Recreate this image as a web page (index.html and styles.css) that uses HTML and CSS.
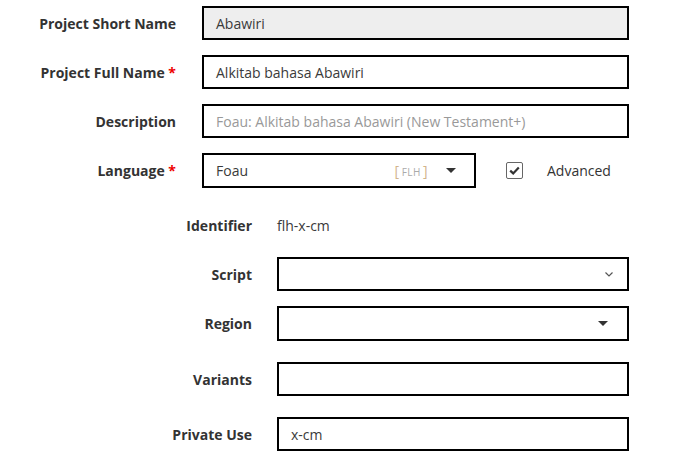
FILE: index.html
```html
<!DOCTYPE html>
<html>
<head>
<meta charset="utf-8">
<link rel="stylesheet" href="styles.css">
</head>
<body>
<form class="form">
  <div class="row">
    <label class="lbl">Project Short Name</label>
    <div class="box box-wide box-readonly"><span class="val">Abawiri</span></div>
  </div>
  <div class="row">
    <label class="lbl">Project Full Name <span class="req">*</span></label>
    <div class="box box-wide"><span class="val">Alkitab bahasa Abawiri</span></div>
  </div>
  <div class="row">
    <label class="lbl">Description</label>
    <div class="box box-wide"><span class="placeholder">Foau: Alkitab bahasa Abawiri (New Testament+)</span></div>
  </div>
  <div class="row">
    <label class="lbl">Language <span class="req">*</span></label>
    <div class="box box-lang">
      <span class="val">Foau</span>
      <span class="code"><span class="br">[</span>FLH<span class="br">]</span></span>
      <span class="caret"></span>
    </div>
    <span class="check">
      <svg width="11" height="9" viewBox="0 0 11 9"><path d="M1.2 4.6 L4.2 7.4 L9.8 1.6" fill="none" stroke="#333" stroke-width="2.2"/></svg>
    </span>
    <span class="check-lbl">Advanced</span>
  </div>

  <div class="row row-adv row-ident">
    <label class="lbl lbl-adv">Identifier</label>
    <span class="ident">flh-x-cm</span>
  </div>
  <div class="row row-adv row-script">
    <label class="lbl lbl-adv">Script</label>
    <div class="box box-adv">
      <svg class="chev" width="8" height="5" viewBox="0 0 8 5"><path d="M0.5 0.5 L4 4 L7.5 0.5" fill="none" stroke="#555" stroke-width="1.2"/></svg>
    </div>
  </div>
  <div class="row row-adv row-region">
    <label class="lbl lbl-adv">Region</label>
    <div class="box box-adv"><span class="caret"></span></div>
  </div>
  <div class="row row-adv row-variants">
    <label class="lbl lbl-adv">Variants</label>
    <div class="box box-adv"></div>
  </div>
  <div class="row row-adv row-private">
    <label class="lbl lbl-adv">Private Use</label>
    <div class="box box-adv"><span class="val">x-cm</span></div>
  </div>
</form>
</body>
</html>
```
FILE: styles.css
```css
html, body {
  margin: 0;
  padding: 0;
  background: #fff;
}
body {
  font-family: "Open Sans", "Noto Sans", sans-serif;
  font-size: 14px;
  color: #333;
}
.form {
  padding-top: 6px;
}
.row {
  display: flex;
  align-items: center;
  gap: 26px;
  margin-bottom: 15px;
}
.lbl {
  width: 176px;
  text-align: right;
  font-weight: 700;
  color: #333;
  flex: none;
}
.req {
  color: #e00;
}
.box {
  box-sizing: border-box;
  height: 34px;
  border: 2px solid #000;
  display: flex;
  align-items: center;
  padding: 0 12px;
  background: #fff;
  flex: none;
}
.box-wide {
  width: 427px;
}
.box-readonly {
  background: #eee;
}
.val {
  color: #3a3a3a;
}
.placeholder {
  color: #999;
}
.box-lang {
  width: 274px;
  height: 35px;
}
.box-lang .val {
  flex: 1;
}
.code {
  font-size: 10px;
  letter-spacing: 0.5px;
  color: #aaa;
  margin-right: 16px;
}
.br {
  color: #d2b48c;
  font-size: 14px;
  margin: 0 2px;
}
.caret {
  width: 0;
  height: 0;
  border-left: 5px solid transparent;
  border-right: 5px solid transparent;
  border-top: 5px solid #333;
  margin-right: 6px;
}
.check {
  box-sizing: border-box;
  width: 17px;
  height: 17px;
  border: 1px solid #666;
  border-radius: 2px;
  display: flex;
  align-items: center;
  justify-content: center;
  margin-left: 4px;
}
.check-lbl {
  margin-left: -2px;
  color: #333;
}
.row-adv {
  gap: 25px;
}
.lbl-adv {
  width: 252px;
}
.box-adv {
  width: 352px;
  justify-content: flex-start;
}
.box-adv .caret,
.box-adv .chev {
  margin-left: auto;
}
.box-adv .caret {
  margin-right: 7px;
}
.box-adv .chev {
  margin-right: 2px;
}
.ident {
  color: #3a3a3a;
}
.row-ident {
  height: 34px;
  margin-top: 20px;
}
.row-region {
  margin-bottom: 21px;
}
.row-region .box {
  height: 35px;
}
.row-variants {
  margin-bottom: 21px;
}
```
